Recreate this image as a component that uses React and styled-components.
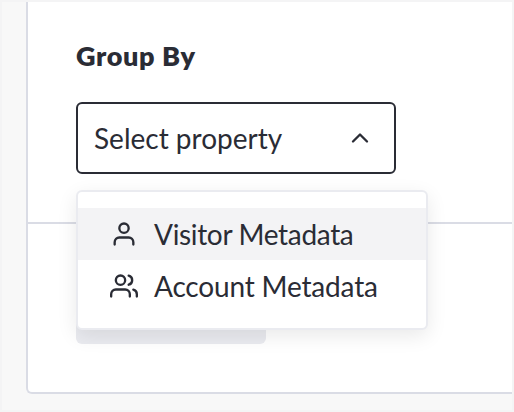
import styled, { createGlobalStyle } from "styled-components";

const options = [
  { id: "visitor", label: "Visitor Metadata", icon: UserIcon, spacing: -0.33 },
  { id: "account", label: "Account Metadata", icon: UsersIcon, spacing: -0.17 },
];

export default function App() {
  return (
    <>
      <GlobalStyle />
      <Page>
        <Card>
          <Section>
            <Title>Group By</Title>
            <SelectWrapper>
              <Select type="button" aria-expanded="true">
                <SelectText>Select property</SelectText>
                <ChevronIcon />
              </Select>
              <Menu role="listbox">
                {options.map(({ id, label, icon: OptionIcon, spacing }) => (
                  <Option key={id} role="option" $active={id === "visitor"}>
                    <OptionIcon />
                    <OptionLabel $spacing={spacing}>{label}</OptionLabel>
                  </Option>
                ))}
              </Menu>
            </SelectWrapper>
          </Section>
          <Footer>
            <FooterButton />
          </Footer>
        </Card>
      </Page>
    </>
  );
}

function UserIcon() {
  return (
    <Icon viewBox="0 0 24 24">
      <path d="M20 21v-2a4 4 0 0 0-4-4H8a4 4 0 0 0-4 4v2" />
      <circle cx="12" cy="7" r="4" />
    </Icon>
  );
}

function UsersIcon() {
  return (
    <Icon viewBox="0 0 24 24">
      <path d="M17 21v-2a4 4 0 0 0-4-4H5a4 4 0 0 0-4 4v2" />
      <circle cx="9" cy="7" r="4" />
      <path d="M23 21v-2a4 4 0 0 0-3-3.87" />
      <path d="M16 3.13a4 4 0 0 1 0 7.75" />
    </Icon>
  );
}

function ChevronIcon() {
  return (
    <Icon viewBox="0 0 24 24">
      <path d="M18 15l-6-6-6 6" />
    </Icon>
  );
}

const GlobalStyle = createGlobalStyle`
  * {
    box-sizing: border-box;
  }
  body {
    margin: 0;
    color: #2a2c35;
    font-family: "Lato", sans-serif;
    font-size: 28px;
    overflow: hidden;
  }
`;

const Page = styled.main`
  height: 412px;
  padding: 0 0 16px 24px;
  background: #f8f8f8;
  border: 2px solid #f4f4f5;
`;

const Card = styled.div`
  display: flex;
  flex-direction: column;
  height: 392px;
  background: #fff;
  border: 2px solid #dadce5;
  border-width: 0 0 2px 2px;
  border-bottom-left-radius: 6px;
`;

const Section = styled.section`
  height: 222px;
  padding: 37px 48px 0;
  border-bottom: 2px solid #dadce5;
`;

const Title = styled.h3`
  height: 34px;
  margin: 0 0 29px;
  font-size: 27px;
  font-weight: 800;
  letter-spacing: 0.62px;
  line-height: 34px;
`;

const SelectWrapper = styled.div`
  position: relative;
  width: 320px;
`;

const Select = styled.button`
  display: flex;
  align-items: center;
  justify-content: space-between;
  width: 100%;
  height: 72px;
  padding: 0 20px 0 16px;
  background: #fff;
  border: 2px solid #2a2c35;
  border-radius: 6px;
  color: inherit;
  font: inherit;
`;

const SelectText = styled.span`
  line-height: 36px;
  white-space: nowrap;
`;

const Menu = styled.div`
  position: absolute;
  z-index: 1;
  top: 88px;
  left: 0;
  width: 352px;
  padding: 16px 0;
  background: #fff;
  border: 2px solid #eaebf0;
  border-radius: 6px;
  box-shadow: 0 6px 20px rgba(0, 0, 0, 0.09);
`;

const Option = styled.div`
  display: flex;
  align-items: center;
  gap: 16px;
  height: 52px;
  padding: 0 32px;
  background: ${({ $active }) => ($active ? "#f3f3f5" : "#fff")};
`;

const OptionLabel = styled.span`
  letter-spacing: ${({ $spacing }) => $spacing}px;
  line-height: 36px;
  white-space: nowrap;
`;

const Footer = styled.div`
  display: flex;
  padding: 48px 48px 0;
`;

const FooterButton = styled.div`
  width: 190px;
  height: 72px;
  background: #eaebf0;
  border-radius: 6px;
`;

const Icon = styled.svg`
  flex: none;
  width: 28px;
  height: 28px;
  fill: none;
  stroke: currentColor;
  stroke-width: 2;
  stroke-linecap: round;
  stroke-linejoin: round;
`;
